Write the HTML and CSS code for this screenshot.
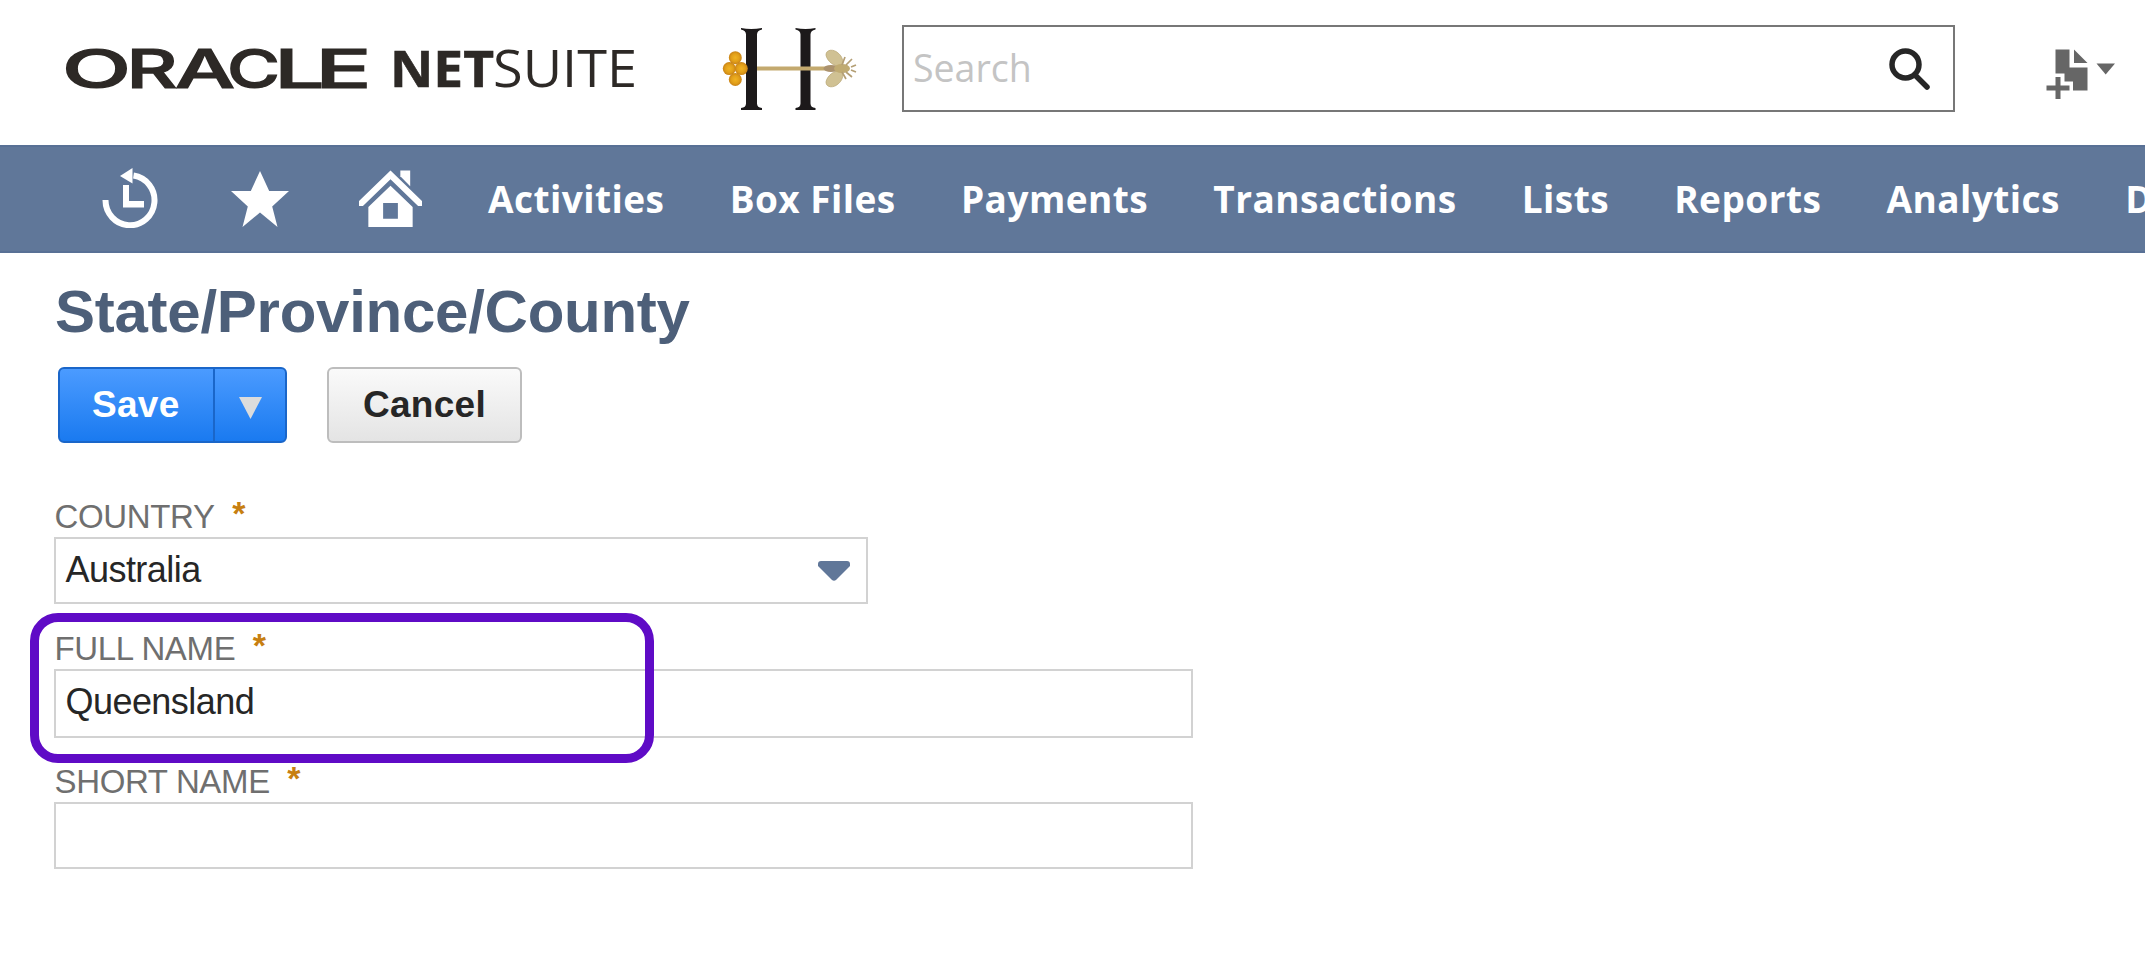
FILE: index.html
```html
<!DOCTYPE html>
<html lang="en">
<head>
<meta charset="utf-8">
<title>State/Province/County</title>
<link rel="stylesheet" href="styles.css">
</head>
<body>
<header class="top">
  <svg class="brand" viewBox="0 -24 590 104" role="img" aria-label="Oracle NetSuite">
    <g fill="#2d2926">
      <text class="oracle" y="49"><tspan x="2" textLength="69" lengthAdjust="spacingAndGlyphs">O</tspan><tspan x="66.500" textLength="51" lengthAdjust="spacingAndGlyphs">R</tspan><tspan x="115" textLength="60" lengthAdjust="spacingAndGlyphs">A</tspan><tspan x="167" textLength="53" lengthAdjust="spacingAndGlyphs">C</tspan><tspan x="214.500" textLength="50" lengthAdjust="spacingAndGlyphs">L</tspan><tspan x="255.500" textLength="56" lengthAdjust="spacingAndGlyphs">E</tspan></text>
      <text class="net" x="330" y="48" textLength="104" lengthAdjust="spacingAndGlyphs">NET</text>
      <text class="suite" x="433" y="48" textLength="144" lengthAdjust="spacingAndGlyphs">SUITE</text>
    </g>
  </svg>
  <svg class="emblem" viewBox="0 0 140 90">
    <defs>
      <radialGradient id="amber"><stop offset="0" stop-color="#f0b323"/><stop offset=".6" stop-color="#e2a01a"/><stop offset="1" stop-color="#c98316"/></radialGradient>
    </defs>
    <g fill="#1c191a">
      <path d="M21 3q10 2 21 0v1.500q-5 1-5 5v69q0 4 5 4.500v2H21v-2q5-.5 5-4.500v-69q0-4-5-5z"/>
      <path d="M75.500 3q10 2 20 0v1.500q-5 1-5 5v69q0 4 5 4.500v2h-20v-2q5-.5 5-4.500v-69q0-4-5-5z"/>
    </g>
    <path d="M37 43.500h72" stroke="#c3a96e" stroke-width="4"/>
    <g fill="url(#amber)"><circle cx="15.300" cy="32.700" r="6.500"/><circle cx="9.300" cy="43.600" r="6.500"/><circle cx="21.300" cy="43.600" r="6.500"/><circle cx="15.300" cy="54.500" r="6.500"/></g>
    <g fill="#d0c193" stroke="#bba978" stroke-width=".8">
      <path d="M122 42c-8 0-15-6-16-12 0-6 8-6 12-2 4 3 6 8 4 14z"/>
      <path d="M122 45c-8 0-15 6-16 12 0 6 8 6 12 2 4-3 6-8 4-14z"/>
    </g>
    <ellipse cx="111" cy="43.500" rx="7.500" ry="3.500" fill="#ab926e"/>
    <ellipse cx="122" cy="43.500" rx="8" ry="4.500" fill="#c0ab72"/>
    <path d="M122 40l3-8M126 40l6-6M122 47l4 7M126 47l6 5M131 42l5-2M131 45l5 2" fill="none" stroke="#b49f75" stroke-width="1.700"/>
  </svg>
  <div class="search">
    <span>Search</span>
    <svg viewBox="0 0 42 43"><circle cx="16.500" cy="17.500" r="13.500" fill="none" stroke="#262626" stroke-width="5.500"/><path d="M27 29l11 11" stroke="#262626" stroke-width="5.500" stroke-linecap="round"/></svg>
  </div>
  <svg class="create" viewBox="0 0 70 52" fill="#666">
    <path d="M9.500 1.500h14v18h18V42.500H27v-9h-8.500v-8h-9z"/>
    <path d="M28 1.500V15h13.500z"/>
    <path d="M9.500 29h5v8.500h9v5h-9v8.500h-5v-8.500h-9v-5h9z"/>
    <path d="M50.500 15.500H69l-9.300 11z"/>
  </svg>
</header>
<nav class="nav">
  <svg class="i-history" viewBox="0 0 58 60"><path d="M3.500 32a24.500 25 0 1 0 28-24.500" fill="none" stroke="#fff" stroke-width="6"/><path d="M18 8L30.500 0v15.500z" fill="#fff"/><path d="M21 17h6v16h15v6.500H21z" fill="#fff"/></svg>
  <svg class="i-star" viewBox="0 0 58 56"><path d="M29 0l9.200 20H58L41.200 35.500 46.500 56 29 41.500 11.500 56l5.300-20.500L0 20h19.800z" fill="#fff"/></svg>
  <svg class="i-home" viewBox="0 0 64 58" fill="#fff"><path d="M32 0l32 31v5h-4L32 9 4 36H0v-5z"/><path d="M42 0h10v16L42 6z"/><path fill-rule="evenodd" d="M32 15.500L54.500 37v20.500h-45V37zM24.500 33v16h15V33z"/></svg>
  <a>Activities</a><a>Box Files</a><a>Payments</a><a>Transactions</a><a>Lists</a><a>Reports</a><a>Analytics</a><a>Documents</a>
</nav>
<main class="page">
  <h1>State/Province/County</h1>
  <div class="actions">
    <div class="save"><span class="label">Save</span><span class="more"><svg viewBox="0 0 23 22"><path d="M0 0h23L11.500 22z" fill="#dcdcdc"/></svg></span></div>
    <div class="cancel">Cancel</div>
  </div>
  <div class="field country">
    <label>COUNTRY<b>*</b></label>
    <div class="box select">Australia<svg viewBox="0 0 32 20"><path d="M3 0h26q3 0 3 3v2L18 19q-2 1.500-4 0L0 5V3q0-3 3-3z" fill="#607799"/></svg></div>
  </div>
  <div class="field full">
    <label>FULL NAME<b>*</b></label>
    <div class="box tall">Queensland</div>
    <div class="highlight"></div>
  </div>
  <div class="field short">
    <label>SHORT NAME<b>*</b></label>
    <div class="box"></div>
  </div>
</main>
</body>
</html>
```
FILE: styles.css
```css
* { box-sizing: border-box; }
body { margin: 0; width: 2145px; height: 970px; overflow: hidden; background: #fff; font-family: "Liberation Sans", Arial, sans-serif; color: #262626; }
svg { display: block; flex: none; }

.top { display: flex; align-items: flex-start; height: 145px; padding-left: 60px; }
.brand { width: 590px; height: 104px; margin-top: 15px; }
.oracle { font: 500 53.500px Inter, sans-serif; stroke: #2d2926; stroke-width: 1.200px; }
.net { font: 700 51px "Open Sans", sans-serif; stroke: #2d2926; stroke-width: .6px; }
.suite { font: 400 51px "Open Sans", sans-serif; }
.emblem { width: 140px; height: 90px; margin: 25px 0 0 70px; }
.search { display: flex; align-items: center; justify-content: space-between; width: 1053px; height: 87px; margin: 25px 0 0 42px; padding: 0 22px 0 9px; border: 2px solid #777; font: 37.500px/80px "Open Sans", sans-serif; color: #c4c4c4; }
.search span { margin-top: -1px; }
.search svg { width: 42px; height: 43px; }
.create { width: 70px; height: 52px; margin: 48px 0 0 91px; }

.nav { display: flex; align-items: center; height: 108px; padding-left: 102px; background: #607799; border-top: 2px solid #587095; border-bottom: 2px solid #587095; overflow: hidden; }
.nav a { flex: none; margin-right: 65.200px; font: 700 37px/50px "Open Sans", sans-serif; letter-spacing: .46px; color: #fff; }
.i-history { width: 58px; height: 60px; margin: -2px 71px 0 0; }
.i-star { width: 58px; height: 56px; margin-right: 70px; }
.i-home { width: 63px; height: 58px; margin-right: 66px; }

.page { padding-left: 54px; }
h1 { margin: 0 0 0 1px; padding-top: 24px; height: 114px; font-size: 60px; line-height: 69px; letter-spacing: -.26px; color: #4d5f79; white-space: nowrap; }
.actions { display: flex; gap: 40px; height: 76px; margin-left: 4px; font-weight: 700; font-size: 37px; line-height: 71px; letter-spacing: .3px; }
.save { display: flex; width: 229px; border: 2px solid #1a66c9; border-radius: 6px; background: linear-gradient(#4b9bff, #1a7af0); color: #fff; }
.save .label { width: 155px; padding-left: 32px; border-right: 2px solid #1a66c9; }
.more { display: flex; flex: 1; justify-content: center; padding-top: 28px; }
.more svg { width: 23px; height: 22px; }
.cancel { width: 195px; border: 2px solid #bdbdbd; border-radius: 6px; background: linear-gradient(#fafafa, #e4e4e4); text-align: center; }

.field { position: relative; }
.country { margin-top: 56px; height: 132px; }
.full { height: 133px; }
label { display: flex; height: 38px; padding-left: .5px; font-size: 33px; line-height: 36px; letter-spacing: -.35px; color: #6f6f6f; }
label b { margin-left: 17.500px; font-size: 34px; line-height: 29px; color: #c77f11; }
.box { display: flex; justify-content: space-between; width: 1139px; height: 67px; padding: 0 16px 0 9.500px; border: 2px solid #d2d2d2; font-size: 36px; line-height: 61px; letter-spacing: -.55px; }
.select { width: 814px; }
.tall { height: 69px; }
.select svg { width: 32px; height: 20px; margin-top: 22px; }
.highlight { position: absolute; left: -24px; top: -18px; width: 624px; height: 150px; border: 9px solid #5f0bc6; border-radius: 28px; }
```
